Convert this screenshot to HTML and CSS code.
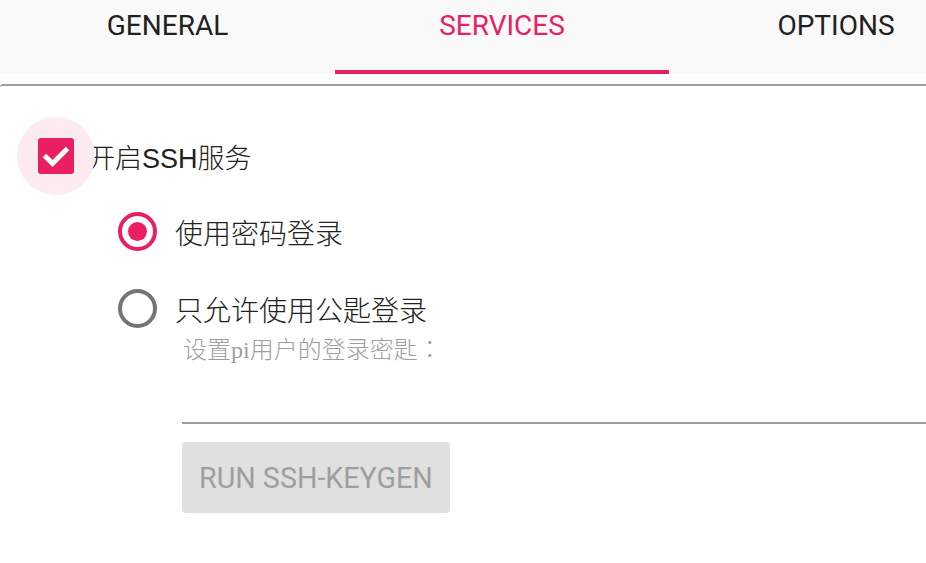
FILE: index.html
```html
<!DOCTYPE html>
<html lang="zh-CN">
<head>
<meta charset="utf-8">
<title>SSH</title>
<link rel="stylesheet" href="styles.css">
</head>
<body>
<div class="dialog">
  <nav class="tabs">
    <div class="tab">GENERAL</div>
    <div class="tab active">SERVICES</div>
    <div class="tab">OPTIONS</div>
  </nav>
  <div class="panel">
    <label class="check-row">
      <span class="check-wrap">
        <span class="checkbox">
          <svg viewBox="0 0 36 36" width="36" height="36"><path d="M6.5 17.5 L14.5 25.5 L29.5 10.5" fill="none" stroke="#fff" stroke-width="5"/></svg>
        </span>
      </span>
      <span class="check-label">开启SSH服务</span>
    </label>
    <div class="radios">
      <label class="radio-row">
        <span class="radio checked"></span>
        <span class="radio-label">使用密码登录</span>
      </label>
      <label class="radio-row second">
        <span class="radio"></span>
        <span class="radio-label">只允许使用公匙登录</span>
      </label>
    </div>
    <div class="keyfield">
      <div class="helper" lang="zh-Hant">设置pi用户的登录密匙：</div>
      <div class="input"></div>
      <button class="btn" disabled>RUN SSH-KEYGEN</button>
    </div>
  </div>
</div>
</body>
</html>
```

FILE: styles.css
```css
html, body {
  margin: 0;
  padding: 0;
  background: #ffffff;
  overflow: hidden;
}
body {
  width: 926px;
  height: 563px;
  font-family: Roboto, "Noto Sans CJK SC", sans-serif;
}
.dialog {
  width: 1003px;
}
.tabs {
  display: grid;
  grid-template-columns: 335px 334px 334px;
  height: 74px;
  background: #f9f9f9;
}
.tab {
  box-sizing: border-box;
  text-align: center;
  font-size: 28px;
  line-height: 34px;
  padding-top: 9px;
  color: #212121;
  border-bottom: 4px solid transparent;
}
.tab.active {
  color: #e91e63;
  border-bottom-color: #e91e63;
}
.panel {
  margin-top: 10px;
  border-top: 2px solid #9e9e9e;
  border-top-left-radius: 3px;
  height: 480px;
}
.check-row {
  display: flex;
  align-items: center;
  height: 78px;
  margin-top: 31px;
  padding-left: 38px;
  gap: 14px;
}
.check-wrap {
  position: relative;
  isolation: isolate;
  display: block;
  width: 36px;
  height: 36px;
}
.check-wrap::before {
  content: "";
  position: absolute;
  left: -21px;
  top: -21px;
  width: 78px;
  height: 78px;
  border-radius: 50%;
  background: #fdebf1;
  z-index: -1;
}
.checkbox {
  display: block;
  width: 36px;
  height: 36px;
  border-radius: 3px;
  background: #e91e63;
}
.checkbox svg {
  display: block;
}
.check-label {
  font-family: "Liberation Sans", "Noto Sans CJK SC", sans-serif;
  font-weight: 300;
  font-size: 27px;
  color: #212121;
}
.radios {
  padding-left: 118px;
  margin-top: 17px;
}
.radio-row {
  display: flex;
  align-items: center;
  gap: 18px;
  height: 39px;
}
.radio-row.second {
  margin-top: 38px;
}
.radio {
  box-sizing: border-box;
  width: 39px;
  height: 39px;
  border-radius: 50%;
  border: 4px solid #757575;
  display: flex;
  align-items: center;
  justify-content: center;
}
.radio.checked {
  border-color: #e91e63;
}
.radio.checked::after {
  content: "";
  width: 19px;
  height: 19px;
  border-radius: 50%;
  background: #e91e63;
}
.radio-label {
  font-family: "Noto Sans CJK SC", sans-serif;
  font-weight: 300;
  font-size: 28px;
  color: #212121;
}
.keyfield {
  padding-left: 182px;
  margin-top: 7px;
}
.helper {
  font-family: "Liberation Serif", "Noto Sans CJK TC", serif;
  font-weight: 300;
  font-size: 24px;
  line-height: 30px;
  color: #9e9e9e;
  padding-left: 1px;
}
.input {
  height: 57px;
  border-bottom: 2px solid #9e9e9e;
}
.btn {
  display: block;
  margin-top: 18px;
  height: 71px;
  padding: 0 17px;
  border: none;
  border-radius: 4px;
  background: #e0e0e0;
  color: #9e9e9e;
  font-family: Roboto, sans-serif;
  font-size: 28.7px;
}
```
